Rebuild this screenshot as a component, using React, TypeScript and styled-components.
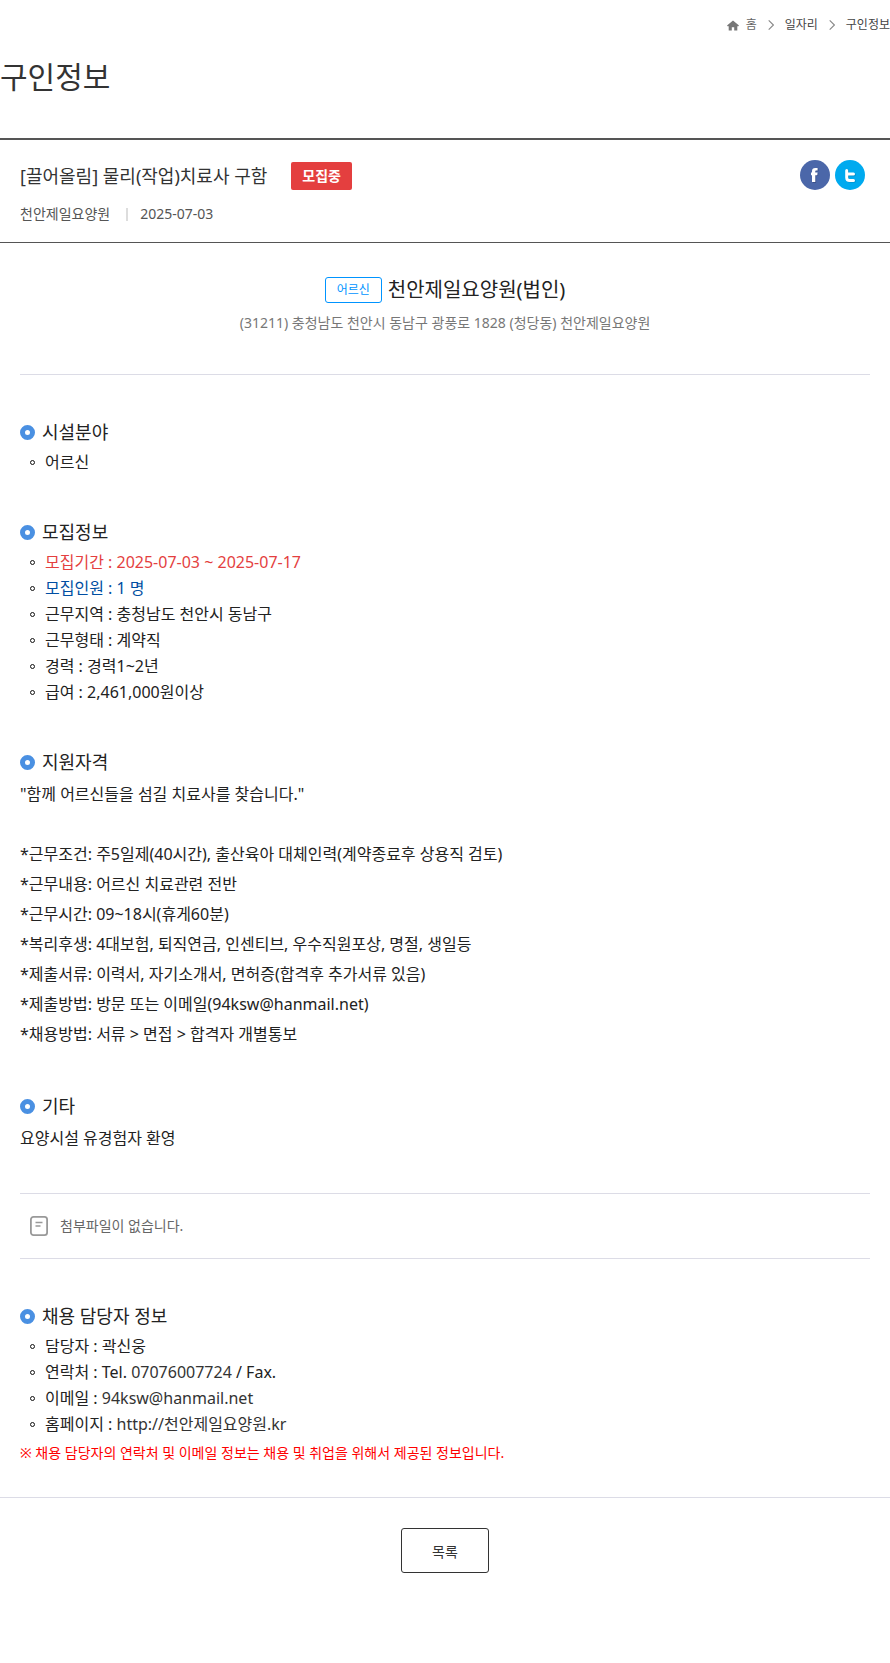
import React from "react";
import styled, { createGlobalStyle } from "styled-components";

const GlobalStyle = createGlobalStyle`
  *, *::before, *::after { box-sizing: border-box; }
  body {
    margin: 0;
    background: #fff;
    color: #222;
    font-family: "Noto Sans", "Noto Sans CJK KR", sans-serif;
    font-size: 16px;
    line-height: 26px;
  }
  h1, h2, h3, p, ul, ol { margin: 0; padding: 0; font-weight: 400; }
  ul, ol { list-style: none; }
  a { color: inherit; text-decoration: none; }
`;

const Page = styled.div`
  padding-bottom: 90px;
`;

const Breadcrumb = styled.ol`
  display: flex;
  justify-content: flex-end;
  align-items: center;
  gap: 11px;
  padding-top: 15px;
  font-size: 12px;
  line-height: 20px;
  color: #444;
`;

const Crumb = styled.li`
  display: flex;
  align-items: center;
  gap: 11px;
`;

const HomeLink = styled.a`
  display: flex;
  align-items: center;
  gap: 7px;
  color: #666;
`;

const PageTitle = styled.h1`
  padding: 19px 0 38px;
  font-size: 30px;
  line-height: 46px;
  color: #333;
`;

const PostHeader = styled.header`
  display: flex;
  justify-content: space-between;
  align-items: flex-start;
  padding: 20px 25px 17px 20px;
  border-top: 2px solid #555;
  border-bottom: 1px solid #555;
`;

const TitleRow = styled.div`
  display: flex;
  align-items: center;
  gap: 24px;
  height: 32px;
`;

const PostTitle = styled.h2`
  font-size: 18px;
  line-height: 28px;
  color: #333;
`;

const StatusBadge = styled.span`
  padding: 0 11px;
  border-radius: 2px;
  background: #e43f3f;
  color: #fff;
  font-size: 14px;
  font-weight: 700;
  line-height: 28px;
`;

const Meta = styled.ul`
  display: flex;
  align-items: center;
  margin-top: 11px;
  font-size: 14px;
  line-height: 22px;
  color: #555;
`;

const MetaItem = styled.li`
  display: flex;
  align-items: center;

  & + &::before {
    content: "";
    width: 2px;
    height: 13px;
    margin: 0 12px 0 16px;
    background: #ddd;
  }
`;

const Share = styled.div`
  display: flex;
  gap: 5px;
`;

const ShareButton = styled.button`
  display: block;
  width: 30px;
  height: 30px;
  padding: 0;
  border: 0;
  border-radius: 50%;
  background: none;
  cursor: pointer;

  svg { display: block; }
`;

const Body = styled.div`
  padding: 0 20px 33px;
  border-bottom: 1px solid #dcdce6;
`;

const Facility = styled.div`
  padding: 32px 0 40px;
  border-bottom: 1px solid #dcdce6;
  text-align: center;
`;

const FacilityName = styled.h3`
  display: flex;
  justify-content: center;
  align-items: center;
  gap: 6px;
  font-size: 20px;
  line-height: 30px;
`;

const TypeBadge = styled.span`
  padding: 0 11px;
  border: 1px solid #0094ff;
  border-radius: 3px;
  color: #0094ff;
  font-size: 12px;
  line-height: 24px;
`;

const Address = styled.p`
  margin-top: 7px;
  font-size: 14px;
  line-height: 22px;
  color: #777;
`;

const Section = styled.section`
  padding-top: 40px;
`;

const SectionTitle = styled.h3`
  display: flex;
  align-items: center;
  gap: 7px;
  height: 34px;
  font-size: 18px;
  line-height: 30px;
`;

const List = styled.ul`
  display: flex;
  flex-direction: column;
`;

const Item = styled.li<{ $color?: string }>`
  display: flex;
  align-items: center;
  gap: 10px;
  padding-left: 10px;
  color: ${(p) => p.$color ?? "#222"};

  &::before {
    content: "";
    width: 5px;
    height: 5px;
    border: 1px solid #111;
    border-radius: 50%;
  }
`;

const ContactLink = styled.a`
  color: #333;
`;

const Paragraph = styled.p`
  line-height: 30px;
  white-space: pre-line;
`;

const Attachment = styled.div`
  display: flex;
  align-items: center;
  gap: 12px;
  height: 66px;
  margin-top: 40px;
  padding-left: 10px;
  border-top: 1px solid #dcdce6;
  border-bottom: 1px solid #dcdce6;
  font-size: 14px;
  color: #666;
`;

const Notice = styled.p`
  margin-top: 5px;
  font-size: 14px;
  line-height: 22px;
  color: #f00;
`;

const Actions = styled.div`
  display: flex;
  justify-content: center;
  padding-top: 30px;
`;

const ListButton = styled.button`
  width: 88px;
  height: 45px;
  border: 1px solid #333;
  border-radius: 3px;
  background: #fff;
  color: #333;
  font-family: inherit;
  font-size: 14px;
  cursor: pointer;
`;

const HomeIcon = () => (
  <svg width="12" height="11" viewBox="0 0 12 11" aria-hidden="true">
    <path d="M6 0.5 L12 5.6 L11 6.4 L10.3 5.9 V10.5 H7.2 V7.2 H4.8 V10.5 H1.7 V5.9 L1 6.4 L0 5.6 Z" fill="#777" />
  </svg>
);

const Chevron = () => (
  <svg width="6" height="10" viewBox="0 0 6 10" aria-hidden="true">
    <path d="M0.7 0.4 L5.4 5 L0.7 9.6" fill="none" stroke="#888" strokeWidth="1.1" />
  </svg>
);

const RingIcon = () => (
  <svg width="15" height="15" viewBox="0 0 15 15" aria-hidden="true">
    <circle cx="7.5" cy="7.5" r="5" fill="#fff" stroke="#4a90e2" strokeWidth="5" />
  </svg>
);

const FileIcon = () => (
  <svg width="18" height="20" viewBox="0 0 18 20" fill="none" stroke="#999" aria-hidden="true">
    <rect x="0.9" y="0.9" width="16.2" height="18.2" rx="2.6" strokeWidth="1.8" />
    <path d="M5.5 6.5 H12.5 M5.5 10 H10.5" strokeWidth="1.7" />
  </svg>
);

const FacebookIcon = () => (
  <svg width="30" height="30" viewBox="0 0 30 30" aria-hidden="true">
    <circle cx="15" cy="15" r="15" fill="#4b67a9" />
    <path d="M12.8 23 V15.9 H11.8 V13.1 H12.8 V11.6 C12.8 9.4 14 8.5 16 8.5 H18.5 V11.2 H17 C16.3 11.2 16.1 11.5 16.1 12.1 V13.1 H18.4 L18.1 15.9 H16.1 V23 Z" fill="#3b5189" />
    <path d="M12 22 V15.2 H11 V12.6 H12 V11 C12 8.9 13.2 8 15.2 8 H17.6 V10.6 H16.3 C15.6 10.6 15.3 10.9 15.3 11.6 V12.6 H17.6 L17.3 15.2 H15.3 V22 Z" fill="#fff" />
  </svg>
);

const TwitterIcon = () => (
  <svg width="30" height="30" viewBox="0 0 30 30" fill="none" aria-hidden="true">
    <circle cx="15" cy="15" r="15" fill="#00aaef" />
    <path d="M12.4 11 V18 Q12.4 21 15.4 21 H19.2 M12.4 14.7 H19.2" stroke="#0088c2" strokeWidth="3" strokeLinecap="round" />
    <path d="M11.7 10.4 V17.4 Q11.7 20.4 14.7 20.4 H18.5 M11.7 14 H18.5" stroke="#fff" strokeWidth="3" strokeLinecap="round" />
  </svg>
);

const qualifications = `"함께 어르신들을 섬길 치료사를 찾습니다."

*근무조건: 주5일제(40시간), 출산육아 대체인력(계약종료후 상용직 검토)
*근무내용: 어르신 치료관련 전반
*근무시간: 09~18시(휴게60분)
*복리후생: 4대보험, 퇴직연금, 인센티브, 우수직원포상, 명절, 생일등
*제출서류: 이력서, 자기소개서, 면허증(합격후 추가서류 있음)
*제출방법: 방문 또는 이메일(94ksw@hanmail.net)
*채용방법: 서류 > 면접 > 합격자 개별통보`;

const Heading = ({ children }: { children: React.ReactNode }) => (
  <SectionTitle>
    <RingIcon />
    {children}
  </SectionTitle>
);

export default function App() {
  return (
    <Page>
      <GlobalStyle />
      <nav aria-label="현재 위치">
        <Breadcrumb>
          <Crumb><HomeLink href="#"><HomeIcon />홈</HomeLink></Crumb>
          <Crumb><Chevron /><a href="#">일자리</a></Crumb>
          <Crumb><Chevron /><a href="#">구인정보</a></Crumb>
        </Breadcrumb>
      </nav>
      <PageTitle>구인정보</PageTitle>

      <PostHeader>
        <div>
          <TitleRow>
            <PostTitle>[끌어올림] 물리(작업)치료사 구함</PostTitle>
            <StatusBadge>모집중</StatusBadge>
          </TitleRow>
          <Meta>
            <MetaItem>천안제일요양원</MetaItem>
            <MetaItem>2025-07-03</MetaItem>
          </Meta>
        </div>
        <Share>
          <ShareButton type="button" aria-label="페이스북 공유"><FacebookIcon /></ShareButton>
          <ShareButton type="button" aria-label="트위터 공유"><TwitterIcon /></ShareButton>
        </Share>
      </PostHeader>

      <Body>
        <Facility>
          <FacilityName><TypeBadge>어르신</TypeBadge>천안제일요양원(법인)</FacilityName>
          <Address>(31211) 충청남도 천안시 동남구 광풍로 1828 (청당동) 천안제일요양원</Address>
        </Facility>

        <Section>
          <Heading>시설분야</Heading>
          <List><Item>어르신</Item></List>
        </Section>

        <Section>
          <Heading>모집정보</Heading>
          <List>
            <Item $color="#e43f3f">모집기간 : 2025-07-03 ~ 2025-07-17</Item>
            <Item $color="#004ea2">모집인원 : 1 명</Item>
            <Item>근무지역 : 충청남도 천안시 동남구</Item>
            <Item>근무형태 : 계약직</Item>
            <Item>경력 : 경력1~2년</Item>
            <Item>급여 : 2,461,000원이상</Item>
          </List>
        </Section>

        <Section>
          <Heading>지원자격</Heading>
          <Paragraph>{qualifications}</Paragraph>
        </Section>

        <Section>
          <Heading>기타</Heading>
          <Paragraph>요양시설 유경험자 환영</Paragraph>
        </Section>

        <Attachment><FileIcon />첨부파일이 없습니다.</Attachment>

        <Section>
          <Heading>채용 담당자 정보</Heading>
          <List>
            <Item>담당자 : 곽신웅</Item>
            <Item><span>연락처 : Tel. <ContactLink href="tel:07076007724">07076007724</ContactLink> / Fax.</span></Item>
            <Item><span>이메일 : <ContactLink href="mailto:94ksw@hanmail.net">94ksw@hanmail.net</ContactLink></span></Item>
            <Item><span>홈페이지 : <ContactLink href="#">http://천안제일요양원.kr</ContactLink></span></Item>
          </List>
          <Notice>※ 채용 담당자의 연락처 및 이메일 정보는 채용 및 취업을 위해서 제공된 정보입니다.</Notice>
        </Section>
      </Body>

      <Actions>
        <ListButton type="button">목록</ListButton>
      </Actions>
    </Page>
  );
}
